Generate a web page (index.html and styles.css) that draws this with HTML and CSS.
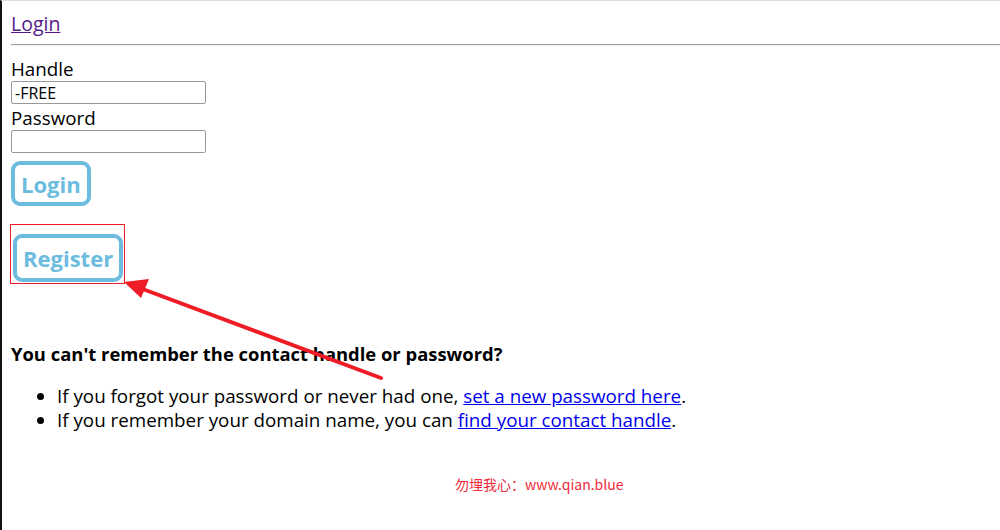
FILE: index.html
```html
<!DOCTYPE html>
<html lang="en">

<head>
    <meta charset="UTF-8">
    <title>Login</title>
    <link rel="stylesheet" href="styles.css">
</head>

<body>
    <div class="page">
        <div class="top">
            <a href="#" class="top-link">Login</a>
        </div>
        <hr>
        <form class="login-form">
            <label for="handle">Handle</label>
            <input type="text" id="handle" value="-FREE">
            <label for="password">Password</label>
            <input type="password" id="password">
            <button type="button" class="btn">Login</button>
            <div class="mark">
                <button type="button" class="btn">Register</button>
            </div>
        </form>

        <h3>You can't remember the contact handle or password?</h3>
        <ul class="help">
            <li>If you forgot your password or never had one, <a href="#">set a new password here</a>.</li>
            <li>If you remember your domain name, you can <a href="#">find your contact handle</a>.</li>
        </ul>

        <div class="watermark">勿埋我心：www.qian.blue</div>
    </div>

    <svg class="arrow" width="1000" height="530" viewBox="0 0 1000 530">
        <line x1="381" y1="378" x2="140" y2="288" stroke="#ee1c24" stroke-width="4" stroke-linecap="round" />
        <polygon points="124,282 149,279 141,298" fill="#ee1c24" />
    </svg>
</body>

</html>
```

FILE: styles.css
```css
body {
    margin: 0;
    height: 530px;
    border-left: 2px solid #111;
    border-top: 1px solid #ddd;
    box-sizing: border-box;
    font-family: 'Open Sans', sans-serif;
    font-size: 18.8px;
    color: #000;
    position: relative;
    overflow: hidden;
}

.page {
    padding-left: 9px;
}

.top {
    height: 43px;
    padding-top: 10px;
    box-sizing: border-box;
}

.top-link {
    color: #551a8b;
    font-size: 19.5px;
    line-height: 24px;
}

hr {
    margin: 0;
    border: none;
    border-top: 1px solid #a0a0a0;
    border-bottom: 1px solid #eee;
}

.login-form {
    display: flex;
    flex-direction: column;
    align-items: flex-start;
    padding-top: 11px;
}

.login-form label {
    line-height: 24px;
}

.login-form input {
    width: 195px;
    height: 23px;
    box-sizing: border-box;
    border: 1px solid #999;
    border-radius: 2px;
    font-family: 'Open Sans', sans-serif;
    font-size: 16px;
    padding: 0 3px;
    margin-bottom: 2px;
}

.btn {
    font-family: 'Open Sans', sans-serif;
    font-weight: bold;
    font-size: 22px;
    color: #6bbcdf;
    background: #fff;
    border: 4px solid #6bbcdf;
    border-radius: 9px;
    padding: 0 6px;
    height: 45px;
    margin-top: 6px;
    cursor: pointer;
}

.mark {
    margin-top: 18px;
    margin-left: -1px;
    border: 1px solid #ee1c24;
    padding: 9px 1px 1px 2px;
}

.mark .btn {
    margin-top: 0;
    height: 48px;
    padding: 0 6px;
}

h3 {
    margin: 58px 0 0;
    font-size: 18.4px;
    line-height: 24px;
}

.help {
    margin: 18px 0 0;
    padding-left: 46px;
}

.help li {
    line-height: 24px;
}

.help a {
    color: #0000ee;
}

.watermark {
    margin: 42px 0 0 444px;
    font-family: 'Noto Sans CJK SC', sans-serif;
    font-size: 14px;
    color: #ee2a3c;
}

.arrow {
    position: absolute;
    left: -2px;
    top: -1px;
    pointer-events: none;
}
```
